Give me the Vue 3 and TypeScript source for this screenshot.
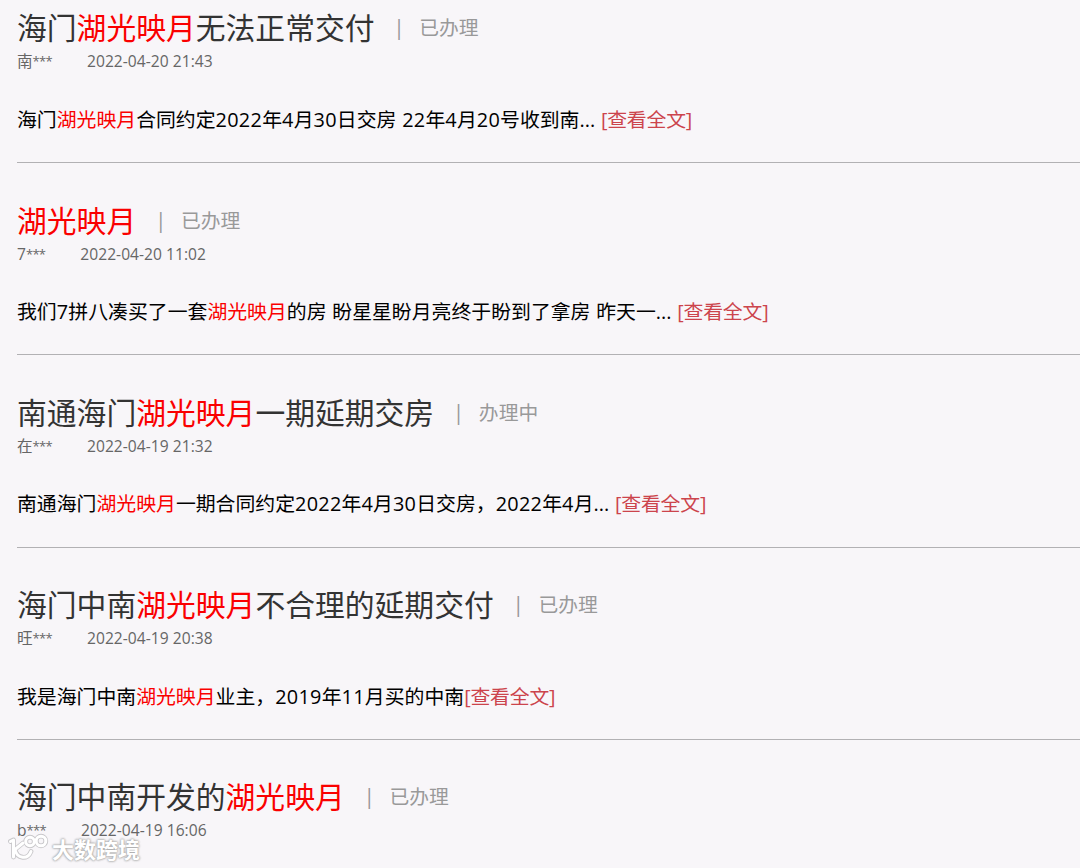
<script setup lang="ts">
interface Complaint {
  id: number
  title: string
  status: string
  user: string
  time: string
  content: string
}

interface Segment {
  text: string
  hit: boolean
  num: boolean
}

const keyword = '湖光映月'

const complaints: Complaint[] = [
  {
    id: 1,
    title: '海门湖光映月无法正常交付',
    status: '已办理',
    user: '南',
    time: '2022-04-20 21:43',
    content: '海门湖光映月合同约定2022年4月30日交房 22年4月20号收到南... ',
  },
  {
    id: 2,
    title: '湖光映月',
    status: '已办理',
    user: '7',
    time: '2022-04-20 11:02',
    content: '我们7拼八凑买了一套湖光映月的房 盼星星盼月亮终于盼到了拿房 昨天一... ',
  },
  {
    id: 3,
    title: '南通海门湖光映月一期延期交房',
    status: '办理中',
    user: '在',
    time: '2022-04-19 21:32',
    content: '南通海门湖光映月一期合同约定2022年4月30日交房，2022年4月... ',
  },
  {
    id: 4,
    title: '海门中南湖光映月不合理的延期交付',
    status: '已办理',
    user: '旺',
    time: '2022-04-19 20:38',
    content: '我是海门中南湖光映月业主，2019年11月买的中南',
  },
  {
    id: 5,
    title: '海门中南开发的湖光映月',
    status: '已办理',
    user: 'b',
    time: '2022-04-19 16:06',
    content: '',
  },
]

// split text so the keyword and the numbers can be styled
function highlight(text: string): Segment[] {
  return text
    .split(new RegExp(`(${keyword}|\\d+)`))
    .filter((part) => part !== '')
    .map((part) => ({ text: part, hit: part === keyword, num: /^\d+$/.test(part) }))
}
</script>

<template>
  <div class="page">
    <ul class="list">
      <li v-for="item in complaints" :key="item.id" class="item">
        <div class="item-head">
          <span class="title"><span
            v-for="(seg, i) in highlight(item.title)"
            :key="i"
            :class="{ hit: seg.hit }"
          >{{ seg.text }}</span></span>
          <span class="divider">|</span>
          <span class="status">{{ item.status }}</span>
        </div>
        <div class="meta">
          <span class="user">{{ item.user }}<span class="mask">***</span></span>
          <span class="time">{{ item.time }}</span>
        </div>
        <p v-if="item.content" class="content"><span
          v-for="(seg, i) in highlight(item.content)"
          :key="i"
          :class="{ hit: seg.hit, num: seg.num }"
        >{{ seg.text }}</span><a class="more">[查看全文]</a></p>
      </li>
    </ul>
    <div class="watermark">
      <svg class="watermark-logo" viewBox="0 0 40 28" width="40" height="28">
        <g class="logo-shade">
          <path d="M2.5 7.5 L5.5 6 V23" />
          <path d="M15 9 L7 15.5 C9 25 20 26 23 17.5" />
          <circle cx="22" cy="7.5" r="4.3" />
          <circle cx="33" cy="7" r="4.8" />
        </g>
        <g class="logo-line">
          <path d="M2.5 7.5 L5.5 6 V23" />
          <path d="M15 9 L7 15.5 C9 25 20 26 23 17.5" />
          <circle cx="22" cy="7.5" r="4.3" />
          <circle cx="33" cy="7" r="4.8" />
        </g>
      </svg>
      <span class="watermark-text">大数跨境</span>
    </div>
  </div>
</template>

<style>
body {
  background: #f8f6f9;
}
</style>

<style scoped>
.page {
  position: relative;
  height: 868px;
  overflow: hidden;
  background: #f8f6f9;
  color: #000;
  font-family: "Open Sans", "Noto Sans CJK SC", sans-serif;
}
.list {
  list-style: none;
  margin: 0;
  padding: 0 0 0 17px;
}
.item {
  box-sizing: border-box;
  height: 192.3px;
  padding-top: 37.5px;
  border-bottom: 1px solid #b2b1b4;
}
.item:first-child {
  height: 163px;
  padding-top: 8px;
}
.item:last-child {
  border-bottom: none;
}
.item-head {
  display: flex;
  align-items: center;
  height: 40px;
  white-space: nowrap;
}
.title {
  font-size: 29.8px;
  line-height: 40px;
  color: #333;
}
.divider {
  width: 5px;
  height: 40px;
  margin-left: 18.7px;
  text-align: center;
  font-size: 21px;
  line-height: 38px;
  color: #999;
}
.status {
  margin-left: 21px;
  font-size: 19.8px;
  line-height: 40px;
  color: #999;
}
.meta {
  display: flex;
  height: 26px;
  font-size: 15.6px;
  line-height: 26px;
  color: #666;
}
.mask {
  font-size: 13px;
  line-height: 1;
  letter-spacing: -0.7px;
  vertical-align: 1.5px;
}
.time {
  margin-left: 35px;
  letter-spacing: 0.03px;
}
.content {
  margin: 30.7px 0 0;
  font-size: 19.88px;
  line-height: 30px;
  word-spacing: 0.6px;
  white-space: nowrap;
}
.num {
  letter-spacing: 0.28px;
}
.hit {
  color: #fa0000;
}
.more {
  color: #cc444c;
  letter-spacing: -0.2px;
  cursor: pointer;
}
.watermark {
  position: absolute;
  left: 8px;
  bottom: 6px;
  display: flex;
  align-items: flex-end;
  gap: 4px;
}
.watermark-logo {
  display: block;
  overflow: visible;
}
.logo-shade,
.logo-line {
  fill: none;
  stroke-linecap: round;
  stroke-linejoin: round;
}
.logo-shade {
  stroke: #c8c7ca;
  stroke-width: 4.8;
}
.logo-line {
  stroke: #fff;
  stroke-width: 3;
}
.watermark-text {
  font-size: 22px;
  font-weight: 700;
  line-height: 26px;
  color: #fff;
  text-shadow: 0 0 2px #aaa, 0 0 2px #aaa, 0 0 3px #bbb;
}
</style>
